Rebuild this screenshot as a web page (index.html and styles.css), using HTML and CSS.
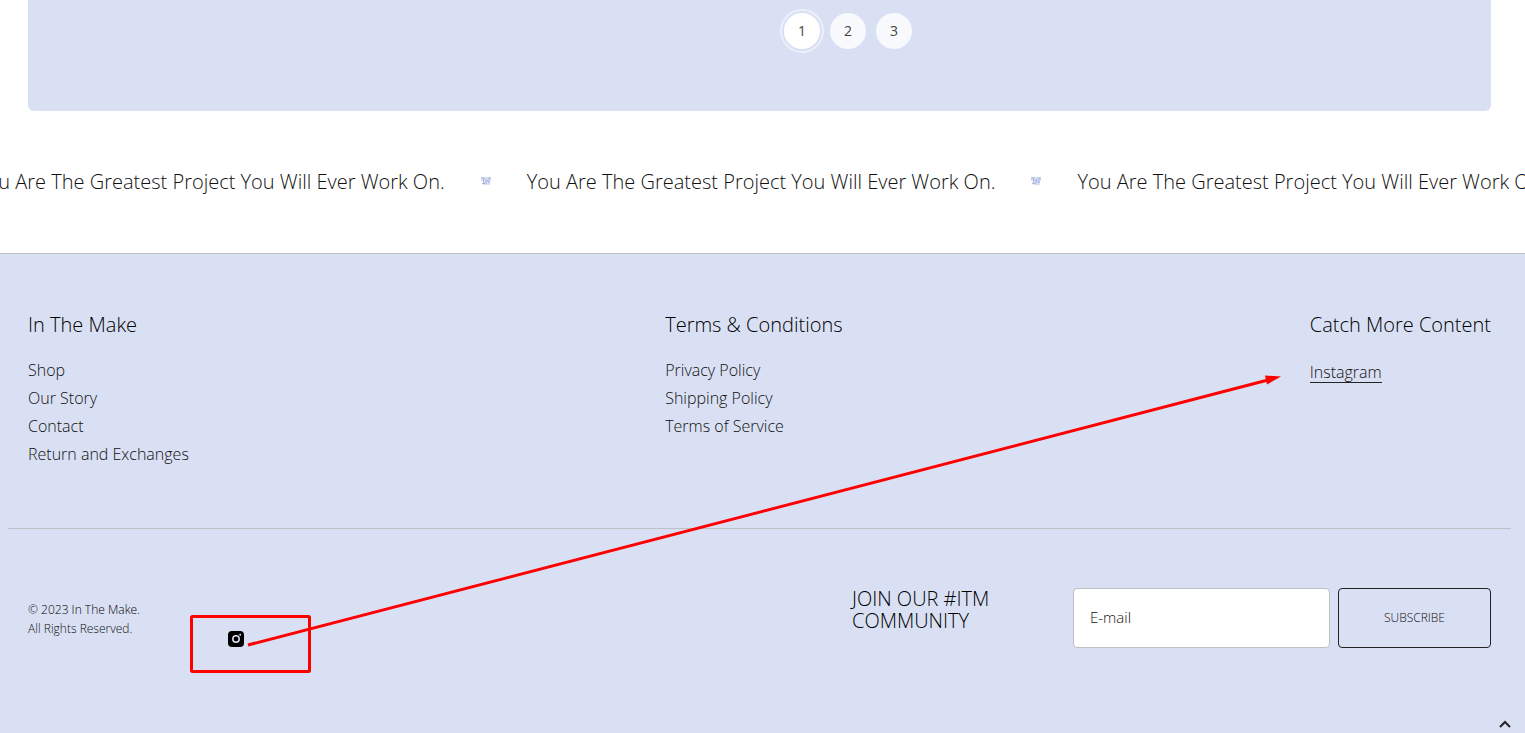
FILE: index.html
```html
<!DOCTYPE html>
<html lang="en">
<head>
  <meta charset="UTF-8" />
  <meta name="viewport" content="width=device-width, initial-scale=1" />
  <title>In The Make</title>
  <link rel="stylesheet" href="styles.css">
</head>
<body>
  <section class="products">
    <nav class="pagination" aria-label="Pages">
      <a href="#1" class="page active">1</a>
      <a href="#2" class="page">2</a>
      <a href="#3" class="page">3</a>
    </nav>
  </section>

  <!-- scrolling text -->
  <div class="marquee">
    <span class="marquee-text">You Are The Greatest Project You Will Ever Work On.</span>
    <svg class="marquee-logo" viewBox="0 0 10 8"><path class="fill" d="M0 0h10v4H9v4H2V4H0z"/><path d="M0 1h4M2.500 1v6M1 6.500h3M5 7V2l3 4V1M7 1h3"/></svg>
    <span class="marquee-text">You Are The Greatest Project You Will Ever Work On.</span>
    <svg class="marquee-logo" viewBox="0 0 10 8"><path class="fill" d="M0 0h10v4H9v4H2V4H0z"/><path d="M0 1h4M2.500 1v6M1 6.500h3M5 7V2l3 4V1M7 1h3"/></svg>
    <span class="marquee-text">You Are The Greatest Project You Will Ever Work On.</span>
  </div>

  <footer class="footer">
    <div class="footer-top">
      <div class="footer-col">
        <h2>In The Make</h2>
        <ul>
          <li><a href="#shop">Shop</a></li>
          <li><a href="#story">Our Story</a></li>
          <li><a href="#contact">Contact</a></li>
          <li><a href="#returns">Return and Exchanges</a></li>
        </ul>
      </div>
      <div class="footer-col">
        <h2>Terms &amp; Conditions</h2>
        <ul>
          <li><a href="#privacy">Privacy Policy</a></li>
          <li><a href="#shipping">Shipping Policy</a></li>
          <li><a href="#terms">Terms of Service</a></li>
        </ul>
      </div>
      <div class="footer-col">
        <h2>Catch More Content</h2>
        <a href="#instagram" class="underlined">Instagram</a>
      </div>
    </div>

    <div class="footer-bottom">
      <div class="copyright">
        <p class="dark">© 2023 In The Make.</p>
        <p>All Rights Reserved.</p>
      </div>
      <a href="#instagram" class="social" aria-label="Instagram">
        <svg viewBox="0 0 16 16">
          <rect width="16" height="16" rx="4"/>
          <circle cx="8" cy="8" r="3.200" fill="none" stroke="#dae0f4" stroke-width="1.500"/>
          <circle cx="12.200" cy="3.800" r="1" fill="#dae0f4"/>
        </svg>
      </a>
      <form class="newsletter">
        <label for="email">JOIN OUR #ITM COMMUNITY</label>
        <input type="email" id="email" placeholder="E-mail">
        <button type="submit">SUBSCRIBE</button>
      </form>
    </div>
  </footer>

  <a href="#top" class="to-top" aria-label="Back to top">
    <svg viewBox="0 0 12 8"><path d="M1 7l5-5 5 5"/></svg>
  </a>

  <!-- red box and arrow over the footer -->
  <svg class="markup" viewBox="0 0 1525 733">
    <rect x="191.500" y="616.500" width="118" height="55" rx="1"/>
    <path d="M248 645L1268 380"/>
    <path class="head" d="M1281 376.500L1265 375.500L1267 384.500Z"/>
  </svg>
</body>
</html>
```

FILE: styles.css
```css
* { box-sizing: border-box; margin: 0; padding: 0; }

body {
  font-family: "Open Sans", sans-serif;
  font-weight: 300;
  color: #111;
  background: #fff;
  min-height: 100vh;
  display: flex;
  flex-direction: column;
  position: relative;
  overflow: hidden;
}

a {
  color: inherit;
  text-decoration: none;
}

.products {
  margin: 0 34px 0 28px;
  padding: 13px 0 62px 177px;
  background: #dae0f4;
  border-radius: 0 0 6px 6px;
}

.pagination {
  display: flex;
  justify-content: center;
  gap: 10px;
}

.page {
  width: 36px;
  height: 36px;
  line-height: 36px;
  text-align: center;
  font-size: 14px;
  font-weight: 400;
  color: #444;
  border-radius: 50%;
  background: rgba(255, 255, 255, 0.8);
}

.page.active {
  background: #fff;
  outline: 2px solid rgba(255, 255, 255, 0.5);
  outline-offset: 2px;
}

.marquee {
  display: flex;
  align-items: center;
  gap: 36px;
  height: 142px;
  padding-bottom: 2px;
  margin-left: -24px;
  overflow: hidden;
}

.marquee-text {
  font-size: 20px;
  white-space: nowrap;
}

.marquee-logo {
  flex: none;
  width: 10px;
  height: 8px;
  fill: none;
  stroke: #a9b7e4;
}

.marquee-logo .fill {
  fill: #dae0f4;
  stroke: none;
}

.footer {
  flex: 1;
  background: #dae0f4;
  border-top: 1px solid #bfbfc6;
}

.footer-top {
  display: flex;
  justify-content: space-between;
  margin: 0 14px 0 8px;
  padding: 58px 20px 60px;
  border-bottom: 1px solid #bfbfc6;
}

.footer-col { min-width: 170px; }

.footer-col h2 {
  font-size: 20px;
  font-weight: 300;
  line-height: 26px;
  color: #000;
  margin-bottom: 18px;
}

.footer-col ul { list-style: none; }

.footer-col li {
  font-size: 16px;
  line-height: 28px;
}

.underlined {
  display: inline-block;
  margin-top: 6px;
  line-height: 20px;
  border-bottom: 1px solid #232323;
}

.footer-bottom {
  display: flex;
  align-items: flex-start;
  padding: 59px 34px 0 28px;
}

.copyright {
  width: 200px;
  padding-top: 12px;
  font-size: 12px;
  line-height: 19px;
}

.copyright .dark { color: #000; }

.social {
  padding-top: 43px;
}

.social svg {
  display: block;
  width: 16px;
  height: 16px;
}

.newsletter {
  display: flex;
  gap: 8px;
  margin-left: auto;
}

.newsletter label {
  width: 213px;
  padding-right: 60px;
  font-size: 20px;
  line-height: 22px;
  color: #000;
}

.newsletter input {
  width: 257px;
  height: 60px;
  padding: 0 16px 2px;
  font: 300 15px "Open Sans", sans-serif;
  background: #fff;
  border: 1px solid #bfbfc6;
  border-radius: 4px;
}

.newsletter input::placeholder { color: #111; }

.newsletter button {
  width: 153px;
  height: 60px;
  padding-bottom: 2px;
  font: 300 12px "Open Sans", sans-serif;
  color: #111;
  background: transparent;
  border: 1px solid #232323;
  border-radius: 4px;
  cursor: pointer;
}

.to-top {
  position: absolute;
  right: 14px;
  bottom: 5px;
}

.to-top svg {
  display: block;
  width: 12px;
  height: 8px;
  fill: none;
  stroke: #232323;
  stroke-width: 2;
}

.markup {
  position: absolute;
  left: 0;
  top: 0;
  width: 100%;
  fill: none;
  stroke: #f00;
  stroke-width: 3;
  pointer-events: none;
}

.markup .head {
  fill: #f00;
  stroke: none;
}
```
